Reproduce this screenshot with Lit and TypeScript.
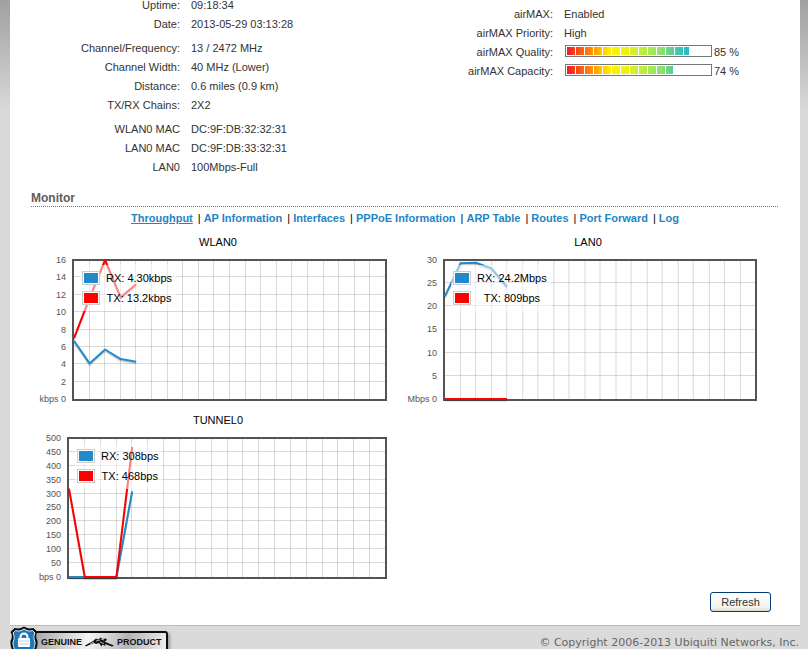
import { LitElement, html, css, svg } from "lit";
import { customElement, property } from "lit/decorators.js";

interface Series {
  name: string;
  label: string;
  color: string;
  values: number[];
}

interface Chart {
  title: string;
  unit: string;
  ticks: number[];
  axisWidth: number;
  plotWidth: number;
  series: Series[];
}

const RX = "#228ac8";
const TX = "#ff0000";

const CHARTS: Chart[] = [
  {
    title: "WLAN0", unit: "kbps", ticks: [16, 14, 12, 10, 8, 6, 4, 2, 0], axisWidth: 39, plotWidth: 315,
    series: [
      { name: "RX", label: "4.30kbps", color: RX, values: [6.7, 4.1, 5.7, 4.6, 4.3] },
      { name: "TX", label: "13.2kbps", color: TX, values: [7, 11.6, 16, 11.7, 13.2] },
    ],
  },
  {
    title: "LAN0", unit: "Mbps", ticks: [30, 25, 20, 15, 10, 5, 0], axisWidth: 40, plotWidth: 313,
    series: [
      { name: "RX", label: "24.2Mbps", color: RX, values: [22.2, 29.3, 29.4, 28.2, 24.2] },
      { name: "TX", label: "809bps", color: TX, values: [0, 0, 0, 0, 0] },
    ],
  },
  {
    title: "TUNNEL0", unit: "bps", ticks: [500, 450, 400, 350, 300, 250, 200, 150, 100, 50, 0], axisWidth: 34, plotWidth: 320,
    series: [
      { name: "RX", label: "308bps", color: RX, values: [0, 0, 0, 0, 308] },
      { name: "TX", label: "468bps", color: TX, values: [318, 0, 0, 0, 468] },
    ],
  },
];

@customElement("throughput-chart")
export class ThroughputChart extends LitElement {
  @property({ attribute: false }) chart!: Chart;

  static styles = css`
    :host { display: block; padding-right: 16px; }
    .title { margin: 0 -16px 0 0; font-size: 11px; font-weight: normal; line-height: 14px; text-align: center; }
    .body { display: flex; margin-top: 10px; }
    .axis {
      display: flex; flex-direction: column; justify-content: space-between; flex: none;
      box-sizing: border-box; margin: -5px 0 -4px; padding-right: 6px;
      font-size: 9px; line-height: 12px; text-align: right; color: #545454; white-space: nowrap;
    }
    .plot { position: relative; flex: 1; min-width: 0; height: 142px; }
    svg { display: block; width: 100%; height: 100%; overflow: visible; }
    .legend {
      position: absolute; top: 6px; left: 8px; display: grid; grid-template-columns: auto auto;
      column-gap: 6px; align-items: center; padding: 3px 4px 3px 2px;
      background: rgba(255, 255, 255, 0.5); font-size: 11px; line-height: 20px; text-align: center; color: #000;
    }
    .swatch { width: 14px; height: 10px; border: 1px solid #ccc; padding: 1px; }
    .rx { background: linear-gradient(#228ac8, #228ac8) content-box, #fff; }
    .tx { background: linear-gradient(#f00, #f00) content-box, #fff; }
  `;

  private grid(w: number, rows: number) {
    const lines = [];
    for (let i = 1; i < 20; i++) {
      const x = Math.round(1 + (i * (w - 3)) / 20) + 0.5;
      lines.push(svg`<path d="M${x} 2V140"></path>`);
    }
    for (let i = 1; i < rows; i++) {
      const y = Math.round((i * 139) / rows) + 0.5;
      lines.push(svg`<path d="M2 ${y}H${w - 2}"></path>`);
    }
    return lines;
  }

  private points(values: number[], w: number, max: number, dy = 0) {
    return values
      .map((v, i) => `${(2 + (i * (w - 4)) / 20).toFixed(2)},${(140 - (v / max) * 139 + dy).toFixed(2)}`)
      .join(" ");
  }

  render() {
    const { title, unit, ticks, axisWidth, plotWidth: w, series } = this.chart;
    return html`
      <h3 class="title">${title}</h3>
      <div class="body">
        <div class="axis" style="width:${axisWidth}px">
          ${ticks.map((t) => html`<span>${t === 0 ? `${unit} 0` : t}</span>`)}
        </div>
        <div class="plot">
          <svg viewBox="0 0 ${w} 142" preserveAspectRatio="none" role="img" aria-label="${title} throughput">
            <g stroke="#000" stroke-opacity="0.15" fill="none">${this.grid(w, ticks.length - 1)}</g>
            <rect x="1" y="1" width=${w - 2} height="140" fill="none" stroke="#545454" stroke-width="2"></rect>
            ${series.map((s) => svg`
              <g fill="none" stroke-linejoin="round">
                <polyline points=${this.points(s.values, w, ticks[0], 2)} stroke="#000" stroke-opacity="0.1" stroke-width="2"></polyline>
                <polyline points=${this.points(s.values, w, ticks[0], 1)} stroke="#000" stroke-opacity="0.1" stroke-width="2"></polyline>
                <polyline points=${this.points(s.values, w, ticks[0])} stroke=${s.color} stroke-width="2"></polyline>
              </g>`)}
          </svg>
          <div class="legend">
            ${series.map((s) => html`<i class="swatch ${s.name.toLowerCase()}"></i><span>${s.name}: ${s.label}</span>`)}
          </div>
        </div>
      </div>
    `;
  }
}

@customElement("app-root")
export class AppRoot extends LitElement {
  static styles = css`
    :host {
      display: block; min-height: 100vh; overflow: hidden;
      background: linear-gradient(#a0a0a0, #dadada 112px) #dadada;
      font-family: "Liberation Sans", Arial, sans-serif; font-size: 11px; color: #333;
    }
    main { margin: 0 8px 0 10px; padding: 0 22px 13px; background: #fff; border-bottom: 1px solid #bbb; }
    .status { display: grid; grid-template-columns: 1fr 1fr; align-items: start; }
    .info { display: grid; grid-template-columns: 148px 1fr; column-gap: 11px; line-height: 19px; margin: 0; }
    .left { margin-top: -4px; }
    .right { margin-top: 5px; }
    dt { text-align: right; }
    dd { margin: 0; }
    .gap { padding-top: 5px; }
    .metered { display: flex; align-items: flex-start; gap: 2px; }
    .bar { box-sizing: border-box; width: 147px; height: 12px; margin: 2px 0 0 1px; border: 1px solid #777; padding: 1px 0; }
    .fill {
      height: 100%;
      background:
        repeating-linear-gradient(90deg, #fff 0 1px, transparent 1px 9px),
        linear-gradient(90deg, #f0142e, #ff5a10 15px, #ff9a00 28px, #fff000 44px, #f4f010 58px, #b8ee40 78px, #8ae070 96px, #50cba0 108px, #28b8d0 122px);
      background-size: 145px 100%;
    }
    h2 { margin: 14px 0 0 -1px; font-size: 12px; line-height: 15px; color: #5c5c5c; border-bottom: 1px dotted #777; }
    nav { display: flex; justify-content: center; margin-top: 5px; font-weight: bold; line-height: 13px; color: #000; }
    nav a { color: #1f85c5; text-decoration: none; }
    nav a.current { text-decoration: underline; }
    nav a + a::before { content: "|"; display: inline-block; margin: 0 3px 0 5px; color: #000; font-weight: normal; }
    .charts { display: grid; grid-template-columns: 1fr 1fr; row-gap: 12px; margin: 10px 5px 0 1px; color: #000; }
    .actions { display: flex; justify-content: flex-end; margin: 13px 7px 0 0; }
    button {
      width: 61px; height: 20px; padding: 0; border: 1px solid #003c74; border-radius: 3px;
      background: linear-gradient(#fff, #f4f3ee 80%, #dcd7cb); font: inherit; color: #333;
    }
    footer { display: flex; align-items: flex-start; justify-content: space-between; margin: 0 9px 0 10px; height: 23px; overflow: hidden; }
    .copyright { margin-top: 10px; font: 11px/14px "DejaVu Sans", Verdana, sans-serif; color: #666; }
    .badge { display: flex; align-items: flex-start; }
    .shield { position: relative; display: block; width: 28px; height: 34px; }
    .plate {
      display: flex; align-items: center; gap: 3px; box-sizing: border-box; height: 22px; margin: 5px 0 0 -4px; padding: 0 4px 0 5px;
      border: 2px solid #0c0c0c; border-radius: 3px; background: linear-gradient(100deg, #a8a8a8, #f4f4f4 40%, #b4b4b4 70%, #efefef);
      box-shadow: 2px 2px 3px #999; font-size: 9px; font-weight: bold; color: #111;
    }
  `;

  private rows(items: [string, string, boolean?][]) {
    return items.map(([k, v, gap]) => html`<dt class=${gap ? "gap" : ""}>${k}</dt><dd class=${gap ? "gap" : ""}>${v}</dd>`);
  }

  private meter(label: string, pct: number) {
    return html`<dt>${label}:</dt>
      <dd class="metered">
        <div class="bar" role="meter" aria-label=${label} aria-valuemin="0" aria-valuemax="100" aria-valuenow=${pct}>
          <div class="fill" style="width:${pct}%"></div>
        </div>
        <span>${pct} %</span>
      </dd>`;
  }

  render() {
    const links = ["Throughput", "AP Information", "Interfaces", "PPPoE Information", "ARP Table", "Routes", "Port Forward", "Log"];
    return html`
      <main>
        <section class="status">
          <dl class="info left">
            ${this.rows([
              ["Uptime:", "09:18:34"],
              ["Date:", "2013-05-29 03:13:28"],
              ["Channel/Frequency:", "13 / 2472 MHz", true],
              ["Channel Width:", "40 MHz (Lower)"],
              ["Distance:", "0.6 miles (0.9 km)"],
              ["TX/RX Chains:", "2X2"],
              ["WLAN0 MAC", "DC:9F:DB:32:32:31", true],
              ["LAN0 MAC", "DC:9F:DB:33:32:31"],
              ["LAN0", "100Mbps-Full"],
            ])}
          </dl>
          <dl class="info right">
            ${this.rows([["airMAX:", "Enabled"], ["airMAX Priority:", "High"]])}
            ${this.meter("airMAX Quality", 85)}
            ${this.meter("airMAX Capacity", 74)}
          </dl>
        </section>
        <h2>Monitor</h2>
        <nav>${links.map((l, i) => html`<a href="#" class=${i === 0 ? "current" : ""}>${l}</a>`)}</nav>
        <section class="charts">
          ${CHARTS.map((c) => html`<throughput-chart .chart=${c}></throughput-chart>`)}
        </section>
        <div class="actions"><button type="button">Refresh</button></div>
      </main>
      <footer>
        <div class="badge">
          <svg class="shield" viewBox="0 0 28 34" aria-hidden="true">
            <path d="M14 0.500C11 2.500 8 3 4.500 2L0.500 6C2.500 9 2 12 0.500 15C-0.500 23 5 30 14 33.500C23 30 28.500 23 27.500 15C26 12 25.500 9 27.500 6L23.500 2C20 3 17 2.500 14 0.500Z" fill="#0b0b0b"></path>
            <path d="M14 3C11 5 8 5.500 5.500 4.500L3 7C4.500 10 4.500 13 3 16C2.500 22 6.500 28 14 31C21.500 28 25.500 22 25 16C23.500 13 23.500 10 25 7L22.500 4.500C20 5.500 17 5 14 3Z" fill="#1d78b8" stroke="#e8f2f8" stroke-width="1"></path>
            <path d="M10.500 13V11a3.500 3.500 0 0 1 7 0V13" fill="none" stroke="#fff" stroke-width="2"></path>
            <rect x="8" y="12" width="12" height="9" rx="1" fill="#fff"></rect>
            <path d="M9 15H19M9 18H19" stroke="#b5d1e4" stroke-width="1"></path>
          </svg>
          <div class="plate">
            <span>GENUINE</span>
            <svg width="29" height="12" viewBox="0 0 29 12" aria-hidden="true">
              <path d="M0 9.500L8 5L11 2.500L13 3.500L16 1.500L17.500 3L21 2.500L22 4L19.500 5.500L24 7.500L29 9.500L27 10.500L20 8L20.500 10L17.500 8.500L16.500 10.500L14 7L11 8L9 7L3 9.500L1 10.500Z" fill="#111"></path>
              <path d="M11 5L15 4M15 6L19 7.500M16 3L19 4M5 8L9 6" stroke="#ddd" stroke-width="0.800"></path>
            </svg>
            <span>PRODUCT</span>
          </div>
        </div>
        <div class="copyright">© Copyright 2006-2013 Ubiquiti Networks, Inc.</div>
      </footer>
    `;
  }
}
